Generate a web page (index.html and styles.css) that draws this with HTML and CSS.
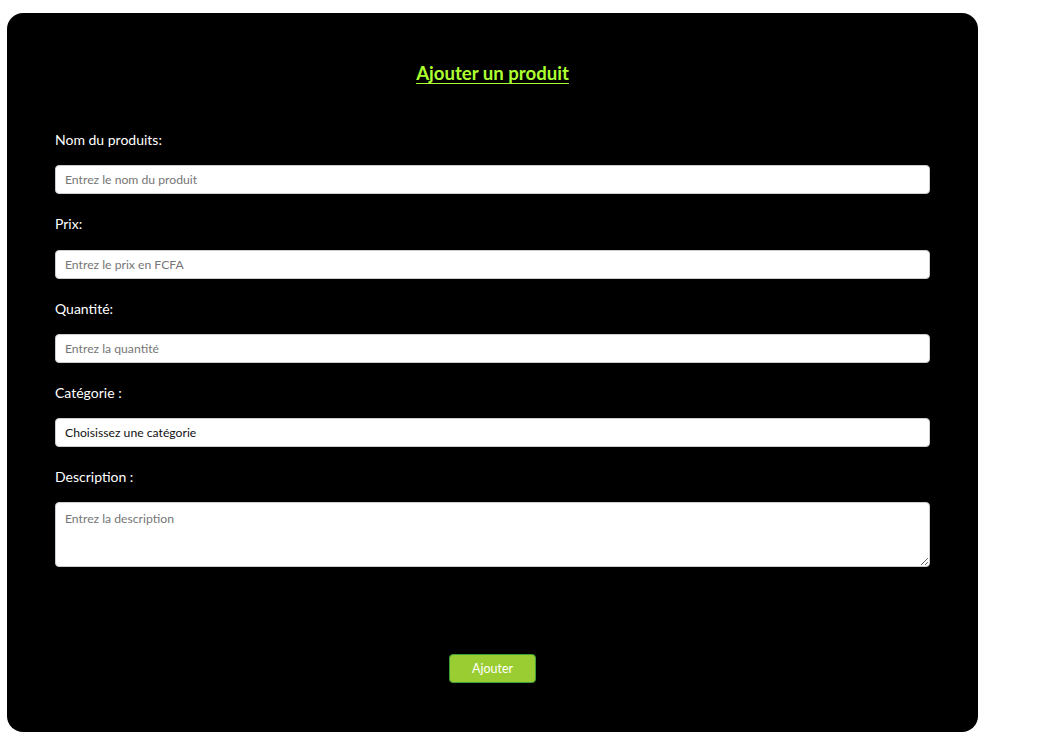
FILE: index.html
```html
<!DOCTYPE html>
<html lang="fr">
<head>
<meta charset="utf-8">
<title>Ajouter un produit</title>
<link rel="stylesheet" href="styles.css">
</head>
<body>
<main class="card">
  <h2 class="title">Ajouter un produit</h2>
  <form class="form">
    <div class="field">
      <label class="label" for="nom">Nom du produits:</label>
      <input class="input" id="nom" type="text" placeholder="Entrez le nom du produit">
    </div>
    <div class="field">
      <label class="label" for="prix">Prix:</label>
      <input class="input" id="prix" type="text" placeholder="Entrez le prix en FCFA">
    </div>
    <div class="field">
      <label class="label" for="qte">Quantité:</label>
      <input class="input" id="qte" type="text" placeholder="Entrez la quantité">
    </div>
    <div class="field">
      <label class="label" for="cat">Catégorie :</label>
      <select class="input select" id="cat">
        <option>Choisissez une catégorie</option>
      </select>
    </div>
    <div class="field">
      <label class="label" for="desc">Description :</label>
      <textarea class="input textarea" id="desc" placeholder="Entrez la description"></textarea>
    </div>
    <div class="actions">
      <button class="btn" type="button">Ajouter</button>
    </div>
  </form>
</main>
</body>
</html>
```
FILE: styles.css
```css
* { box-sizing: border-box; }
html, body { margin: 0; padding: 0; background: #fff; }
body {
  font-family: Lato, "Open Sans", sans-serif;
  padding: 13px 0 0 7px;
}
.card {
  width: 971px;
  height: 719px;
  background: #000;
  border-radius: 16px;
  padding: 0 48px;
  display: flex;
  flex-direction: column;
}
.title {
  margin: 48px 0 0;
  text-align: center;
  color: #adff2f;
  font-size: 18.6px;
  font-weight: 700;
  line-height: 24px;
  text-decoration: underline;
  text-underline-offset: 3px;
}
.form {
  display: flex;
  flex-direction: column;
  margin-top: 46px;
}
.field {
  display: flex;
  flex-direction: column;
  margin-bottom: 21px;
}
.label {
  color: #fff;
  font-size: 14px;
  line-height: 17.3px;
  margin-bottom: 17px;
}
.input {
  width: 100%;
  height: 29px;
  border: 1px solid #c8cdd2;
  border-radius: 4px;
  background: #fff;
  padding: 0 9px;
  font-family: Lato, "Open Sans", sans-serif;
  font-size: 12.2px;
  color: #111;
  outline: none;
}
.input::placeholder { color: #767676; }
.select {
  appearance: none;
  -webkit-appearance: none;
}
.textarea {
  height: 65px;
  padding: 8px 9px;
  resize: vertical;
}
.actions {
  display: flex;
  justify-content: center;
  margin-top: 66px;
}
.btn {
  width: 87px;
  height: 29px;
  background: #9acd32;
  border: 1px solid #3f9c3a;
  border-radius: 4px;
  color: #fff;
  font-family: Lato, "Open Sans", sans-serif;
  font-size: 12.5px;
}
```
